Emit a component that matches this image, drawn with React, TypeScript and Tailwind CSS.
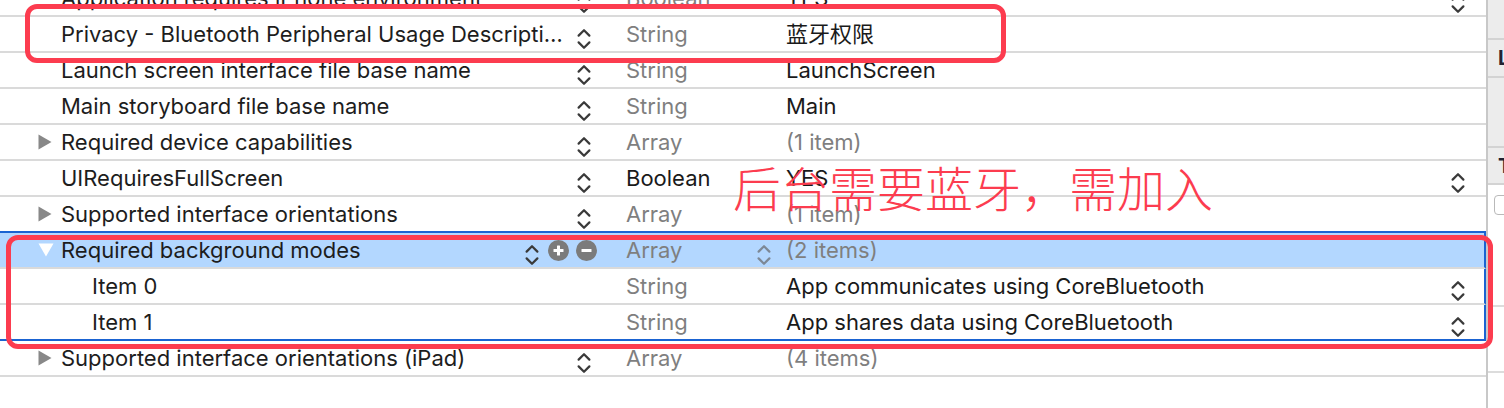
import type { ReactNode } from "react";

// ─── Glyphs ───────────────────────────────────────────────────────────────────

function Stepper({ className = "", tone = "#3a3a3a" }: { className?: string; tone?: string }) {
  return (
    <svg width="14" height="22" viewBox="0 0 14 22" className={`shrink-0 ${className}`} aria-hidden>
      <g fill="none" stroke={tone} strokeWidth="2.2" strokeLinecap="round" strokeLinejoin="round">
        <path d="M1.6 7.6 L7 2.2 L12.4 7.6" />
        <path d="M1.6 14.4 L7 19.8 L12.4 14.4" />
      </g>
    </svg>
  );
}

function Disclosure({ open }: { open?: boolean }) {
  return open ? (
    <svg width="16" height="14" viewBox="0 0 16 14" aria-hidden>
      <path d="M0.5 0.5 H15.5 L8 13.5 Z" fill="#ffffff" />
    </svg>
  ) : (
    <svg width="14" height="16" viewBox="0 0 14 16" aria-hidden>
      <path d="M0.5 0.5 L13.5 8 L0.5 15.5 Z" fill="#888888" />
    </svg>
  );
}

function RoundButton({ minus }: { minus?: boolean }) {
  return (
    <span className="flex h-[21px] w-[21px] shrink-0 items-center justify-center rounded-full bg-[#7b7b7b]">
      <svg width="11" height="11" viewBox="0 0 11 11" aria-hidden>
        <rect x="0.5" y="4" width="10" height="3" rx="0.5" fill="#ffffff" />
        {!minus && <rect x="4" y="0.5" width="3" height="10" rx="0.5" fill="#ffffff" />}
      </svg>
    </span>
  );
}

// ─── Rows ─────────────────────────────────────────────────────────────────────

type Row = {
  name: string;
  child?: boolean;
  disclosure?: "open" | "closed";
  keyStepper?: boolean;
  type: string;
  typeDark?: boolean;
  value: ReactNode;
  valueGray?: boolean;
  valueStepper?: boolean;
  selected?: boolean;
  grouped?: boolean;
  blueBottom?: boolean;
};

const ROWS: Row[] = [
  { name: "Application requires iPhone environment", keyStepper: true, type: "Boolean", value: "YES", valueStepper: true },
  { name: "Privacy - Bluetooth Peripheral Usage Descripti…", keyStepper: true, type: "String", value: "蓝牙权限" },
  { name: "Launch screen interface file base name", keyStepper: true, type: "String", value: "LaunchScreen" },
  { name: "Main storyboard file base name", keyStepper: true, type: "String", value: "Main" },
  { name: "Required device capabilities", disclosure: "closed", keyStepper: true, type: "Array", value: "(1 item)", valueGray: true },
  { name: "UIRequiresFullScreen", keyStepper: true, type: "Boolean", typeDark: true, value: "YES", valueStepper: true },
  { name: "Supported interface orientations", disclosure: "closed", keyStepper: true, type: "Array", value: "(1 item)", valueGray: true, blueBottom: true },
  { name: "Required background modes", disclosure: "open", type: "Array", value: "(2 items)", valueGray: true, selected: true, grouped: true },
  { name: "Item 0", child: true, type: "String", value: "App communicates using CoreBluetooth", valueStepper: true, grouped: true },
  { name: "Item 1", child: true, type: "String", value: "App shares data using CoreBluetooth", valueStepper: true, grouped: true, blueBottom: true },
  { name: "Supported interface orientations (iPad)", disclosure: "closed", keyStepper: true, type: "Array", value: "(4 items)", valueGray: true },
];

function PlistRow({ row }: { row: Row }) {
  return (
    <div
      className={[
        "flex h-[36px] items-center border-b-2",
        row.blueBottom ? "border-b-[#1a63d2]" : "border-b-[#dadada]",
        row.grouped ? "border-r-2 border-r-[#1a63d2]" : "",
        row.selected ? "bg-[#b3d7ff]" : "bg-white",
      ].join(" ")}
    >
      {/* Key */}
      <div className="flex w-[626px] shrink-0 items-center">
        {row.child ? (
          <div className="w-[92px] shrink-0" />
        ) : (
          <div className="flex w-[61px] shrink-0 justify-start pl-[38px]">
            {row.disclosure && <Disclosure open={row.disclosure === "open"} />}
          </div>
        )}
        <span className="min-w-0 flex-1 whitespace-nowrap text-[#1d1d1d]">{row.name}</span>
        {row.selected ? (
          <div className="mr-[29px] flex items-center">
            <Stepper className="mt-[9px]" />
            <div className="ml-[9px] flex gap-[7px]">
              <RoundButton />
              <RoundButton minus />
            </div>
          </div>
        ) : row.keyStepper ? (
          <Stepper className="mr-[35px] mt-[9px]" />
        ) : null}
      </div>

      {/* Type */}
      <div className="flex w-[160px] shrink-0 items-center">
        <span className={`flex-1 ${row.typeDark ? "text-[#1a1a1a]" : "text-[#7f7f7f]"}`}>{row.type}</span>
        {row.selected && <Stepper className="mr-[15px] mt-[9px]" tone="#7d8896" />}
      </div>

      {/* Value */}
      <div className="flex min-w-0 flex-1 items-center">
        <span className={`flex-1 whitespace-nowrap ${row.valueGray ? "text-[#7f7f7f]" : "text-[#1a1a1a]"}`}>
          {row.value}
        </span>
        {row.valueStepper && (
          <Stepper className={`${row.grouped ? "mr-[19px]" : "mr-[21px]"} mt-[9px]`} />
        )}
      </div>
    </div>
  );
}

// ─── Inspector sliver on the right ───────────────────────────────────────────

function InspectorEdge() {
  return (
    <div className="flex w-[16px] shrink-0 flex-col bg-[#ececec] text-[20px] font-bold text-[#222233]">
      <div className="h-[40px] border-b-2 border-[#d3d3d3]" />
      <div className="flex h-[38px] items-center border-b-2 border-[#d3d3d3] pl-[10px]">L</div>
      <div className="h-[70px] border-b-2 border-[#d3d3d3]" />
      <div className="flex h-[37px] items-center border-b-2 border-[#d3d3d3] pl-[10px]">T</div>
      <div className="flex-1 bg-white">
        <div className="h-[122px] border-b-2 border-[#dcdcdc] pl-[6px] pt-[10px]">
          <div className="h-[20px] w-[16px] rounded-[4px] border border-[#b9b9b9] bg-white" />
        </div>
        <div className="h-[66px] border-b-2 border-[#dcdcdc]" />
      </div>
    </div>
  );
}

// ─── Page ─────────────────────────────────────────────────────────────────────

export default function App() {
  return (
    <div className="relative flex h-[408px] w-[1504px] overflow-hidden bg-white font-['Inter','Noto_Sans_CJK_SC',sans-serif] text-[22px]">
      <div className="w-[1486px] shrink-0">
        <div className="-mt-[19px]">
          {ROWS.map((row) => (
            <PlistRow key={row.name} row={row} />
          ))}
        </div>
      </div>
      <div className="w-[2px] shrink-0 bg-[#c8c8c8]" />
      <InspectorEdge />

      {/* Annotations */}
      <div className="pointer-events-none absolute left-[25px] top-[4px] h-[59px] w-[981px] rounded-[12px] border-[5px] border-[#fc3c4f]" />
      <div className="pointer-events-none absolute left-[6px] top-[235px] h-[114px] w-[1487px] rounded-[12px] border-[5px] border-[#fc3c4f]" />
      <div className="pointer-events-none absolute left-[733px] top-[158px] whitespace-nowrap font-['Noto_Sans_CJK_SC',sans-serif] text-[48px] font-light leading-[56px] text-[#fc3c4f]">
        后台需要蓝牙，需加入
      </div>
    </div>
  );
}
